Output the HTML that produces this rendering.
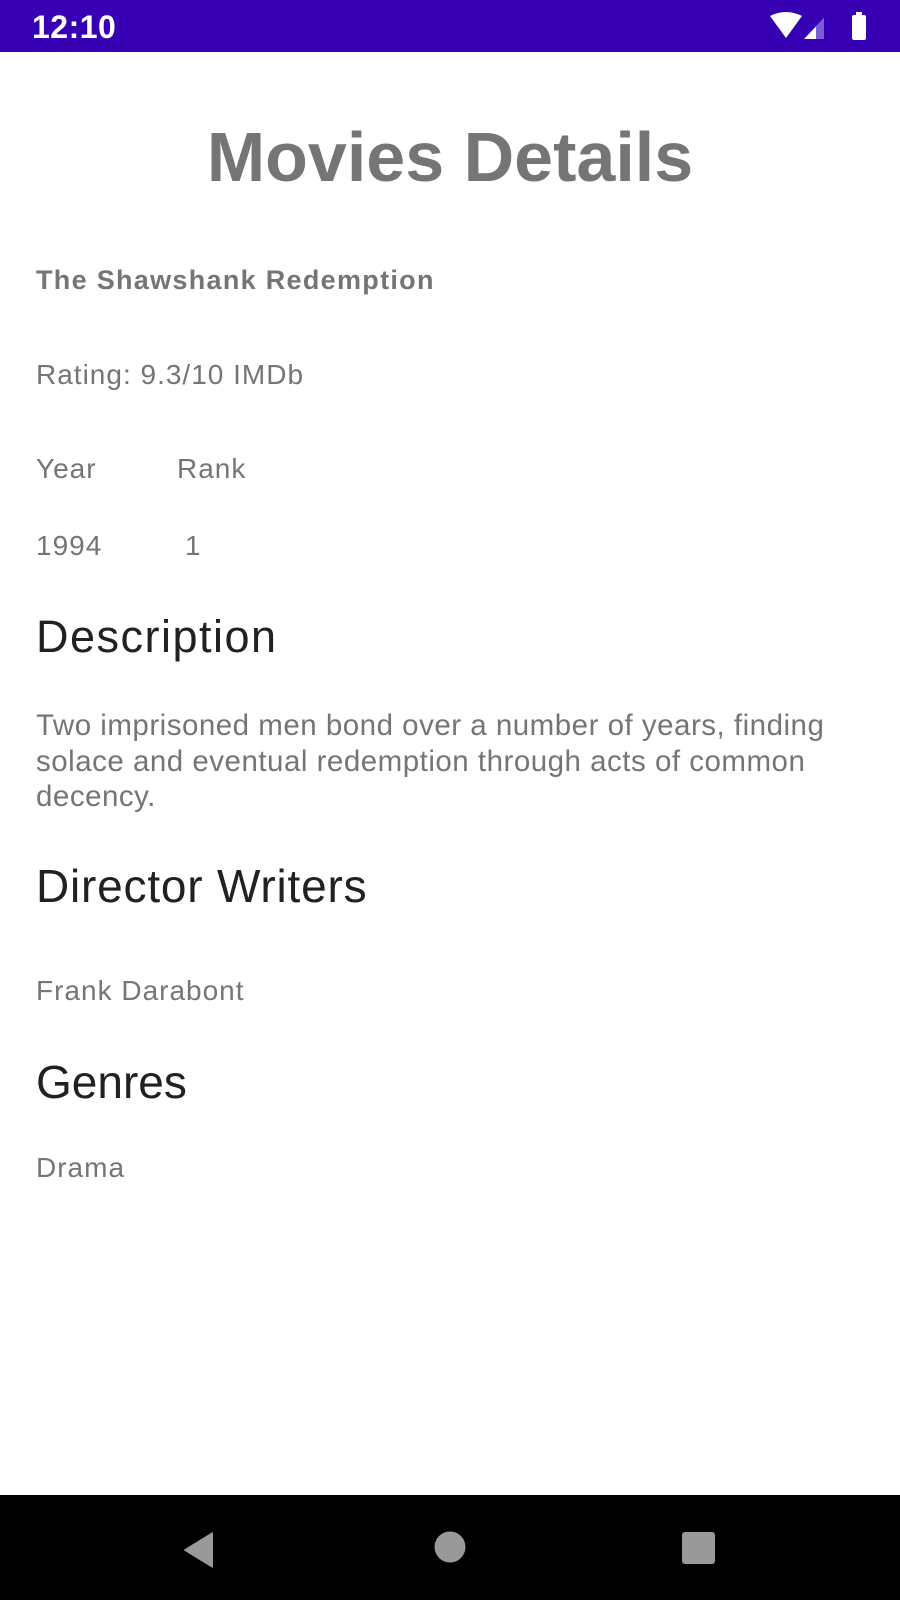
<!DOCTYPE html>
<html><head><meta charset="utf-8"><style>
*{margin:0;padding:0;box-sizing:border-box}
body{width:900px;height:1600px;background:#fff;position:relative;overflow:hidden;font-family:"Liberation Sans",Roboto,sans-serif}
.t{position:absolute;white-space:nowrap;line-height:1}
.g{color:#757575}
.d{color:#212121}
.s{letter-spacing:1px}
</style></head><body>
<div style="position:absolute;left:0;top:0;width:900px;height:52px;background:#3700b3"></div>
<div class="t" style="left:32px;top:11px;font-size:32px;color:#fff;font-weight:bold;letter-spacing:0.5px">12:10</div>
<svg style="position:absolute;left:768px;top:12px" width="106" height="30" viewBox="0 0 106 30">
<path d="M2 4 Q18 -4 34 4 L18 26 Z" fill="#fff"/>
<path d="M36 27 L56 6 V27 Z" fill="#fff"/>
<path d="M48 14.5 L56 6 V27 H48 Z" fill="#7a5cd6"/>
<rect x="84" y="3" width="14" height="25" rx="2" fill="#fff"/>
<rect x="88" y="0" width="6" height="4" fill="#fff"/>
</svg>
<div class="t g" style="left:0;width:900px;text-align:center;top:122px;font-size:70px;font-weight:bold">Movies Details</div>
<div class="t g" style="left:36px;top:267px;font-size:27px;font-weight:bold;letter-spacing:1.3px">The Shawshank Redemption</div>
<div class="t g s" style="left:36px;top:361px;font-size:28px">Rating: 9.3/10 IMDb</div>
<div class="t g s" style="left:36px;top:455px;font-size:28px">Year</div>
<div class="t g s" style="left:177px;top:455px;font-size:28px">Rank</div>
<div class="t g s" style="left:36px;top:532px;font-size:28px">1994</div>
<div class="t g" style="left:185px;top:532px;font-size:28px">1</div>
<div class="t d" style="left:36px;top:614px;font-size:45px;letter-spacing:1.5px">Description</div>
<div class="t g" style="left:36px;top:708px;font-size:29.5px;line-height:35.5px;white-space:normal;width:860px;letter-spacing:0.5px">Two imprisoned men bond over a number of years, finding solace and eventual redemption through acts of common decency.</div>
<div class="t d" style="left:36px;top:863px;font-size:46px;letter-spacing:0.8px">Director Writers</div>
<div class="t g s" style="left:36px;top:977px;font-size:28px">Frank Darabont</div>
<div class="t d" style="left:36px;top:1059px;font-size:46px">Genres</div>
<div class="t g s" style="left:36px;top:1154px;font-size:28px">Drama</div>
<div style="position:absolute;left:0;top:1495px;width:900px;height:105px;background:#000"></div>
<svg style="position:absolute;left:0;top:1495px" width="900" height="105">
<path d="M213 39 L213 71 Q213 74 211 72 L185 56 Q183 55 185 54 L211 38 Q213 36 213 39 Z" fill="#999"/>
<circle cx="450" cy="52" r="15.5" fill="#999"/>
<rect x="682" y="37" width="33" height="32" rx="3" fill="#999"/>
</svg>
</body></html>
